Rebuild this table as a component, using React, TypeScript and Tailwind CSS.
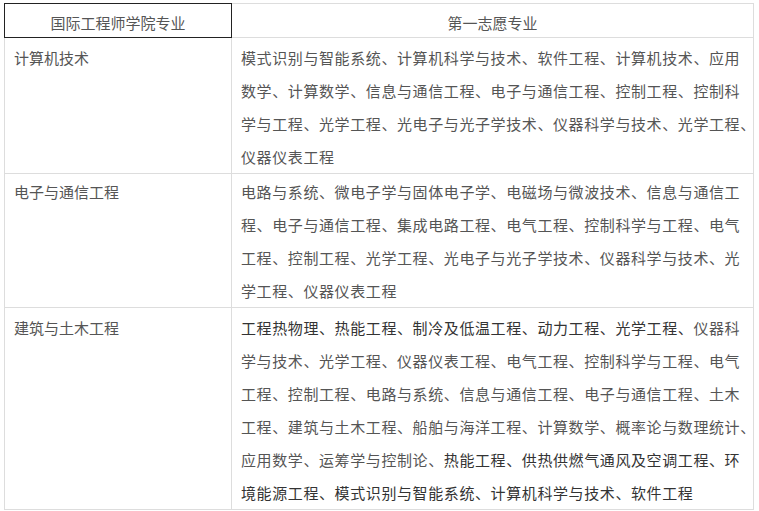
type Part = { text: string; dark?: boolean };

const rows: { name: string; pad: string; lines: Part[][] }[] = [
  {
    name: '计算机技术',
    pad: 'pt-[3px]',
    lines: [
      [{ text: '模式识别与智能系统、计算机科学与技术、软件工程、计算机技术、应用' }],
      [{ text: '数学、计算数学、信息与通信工程、电子与通信工程、控制工程、控制科' }],
      [{ text: '学与工程、光学工程、光电子与光子学技术、仪器科学与技术、光学工程、' }],
      [{ text: '仪器仪表工程' }],
    ],
  },
  {
    name: '电子与通信工程',
    pad: 'pt-[1px]',
    lines: [
      [{ text: '电路与系统、微电子学与固体电子学、电磁场与微波技术、信息与通信工' }],
      [{ text: '程、电子与通信工程、集成电路工程、电气工程、控制科学与工程、电气' }],
      [{ text: '工程、控制工程、光学工程、光电子与光子学技术、仪器科学与技术、光' }],
      [{ text: '学工程、仪器仪表工程' }],
    ],
  },
  {
    name: '建筑与土木工程',
    pad: 'pt-[3px]',
    lines: [
      [
        { text: '工程热物理、热能工程、制冷及低温工程、动力工程、光学工程、', dark: true },
        { text: '仪器科' },
      ],
      [{ text: '学与技术、光学工程、仪器仪表工程、电气工程、控制科学与工程、电气' }],
      [{ text: '工程、控制工程、电路与系统、信息与通信工程、电子与通信工程、土木' }],
      [{ text: '工程、建筑与土木工程、船舶与海洋工程、计算数学、概率论与数理统计、' }],
      [
        { text: '应用数学、运筹学与控制论、' },
        { text: '热能工程、供热供燃气通风及空调工程、环', dark: true },
      ],
      [{ text: '境能源工程、模式识别与智能系统、计算机科学与技术、软件工程', dark: true }],
    ],
  },
];

export default function App() {
  return (
    <div
      className="w-[759px] h-[511px] bg-white overflow-hidden pt-[3px] pl-[4px]"
      style={{ fontFamily: '"Noto Sans CJK SC", "Noto Sans", sans-serif' }}
    >
      <table className="table-fixed border-collapse w-[749px] text-[15px] text-[#555]">
        <colgroup>
          <col className="w-[227px]" />
          <col className="w-[522px]" />
        </colgroup>
        <thead>
          <tr>
            <th className="border border-[#222] font-normal text-center pt-[5px] pb-0 leading-[28px]">
              国际工程师学院专业
            </th>
            <th className="border border-[#ddd] font-normal text-center pt-[5px] pb-0 leading-[28px]">
              第一志愿专业
            </th>
          </tr>
        </thead>
        <tbody>
          {rows.map(r => (
            <tr key={r.name}>
              <td className={`border border-[#ddd] align-top px-[9px] leading-[33px] ${r.pad}`}>
                {r.name}
              </td>
              <td
                className={`border border-[#ddd] align-top pl-[9px] pr-0 leading-[33px] tracking-[0.6px] whitespace-nowrap ${r.pad}`}
              >
                {r.lines.map((line, i) => (
                  <div key={i}>
                    {line.map((p, j) => (
                      <span key={j} className={p.dark ? 'text-[#333]' : ''}>
                        {p.text}
                      </span>
                    ))}
                  </div>
                ))}
              </td>
            </tr>
          ))}
        </tbody>
      </table>
    </div>
  );
}
